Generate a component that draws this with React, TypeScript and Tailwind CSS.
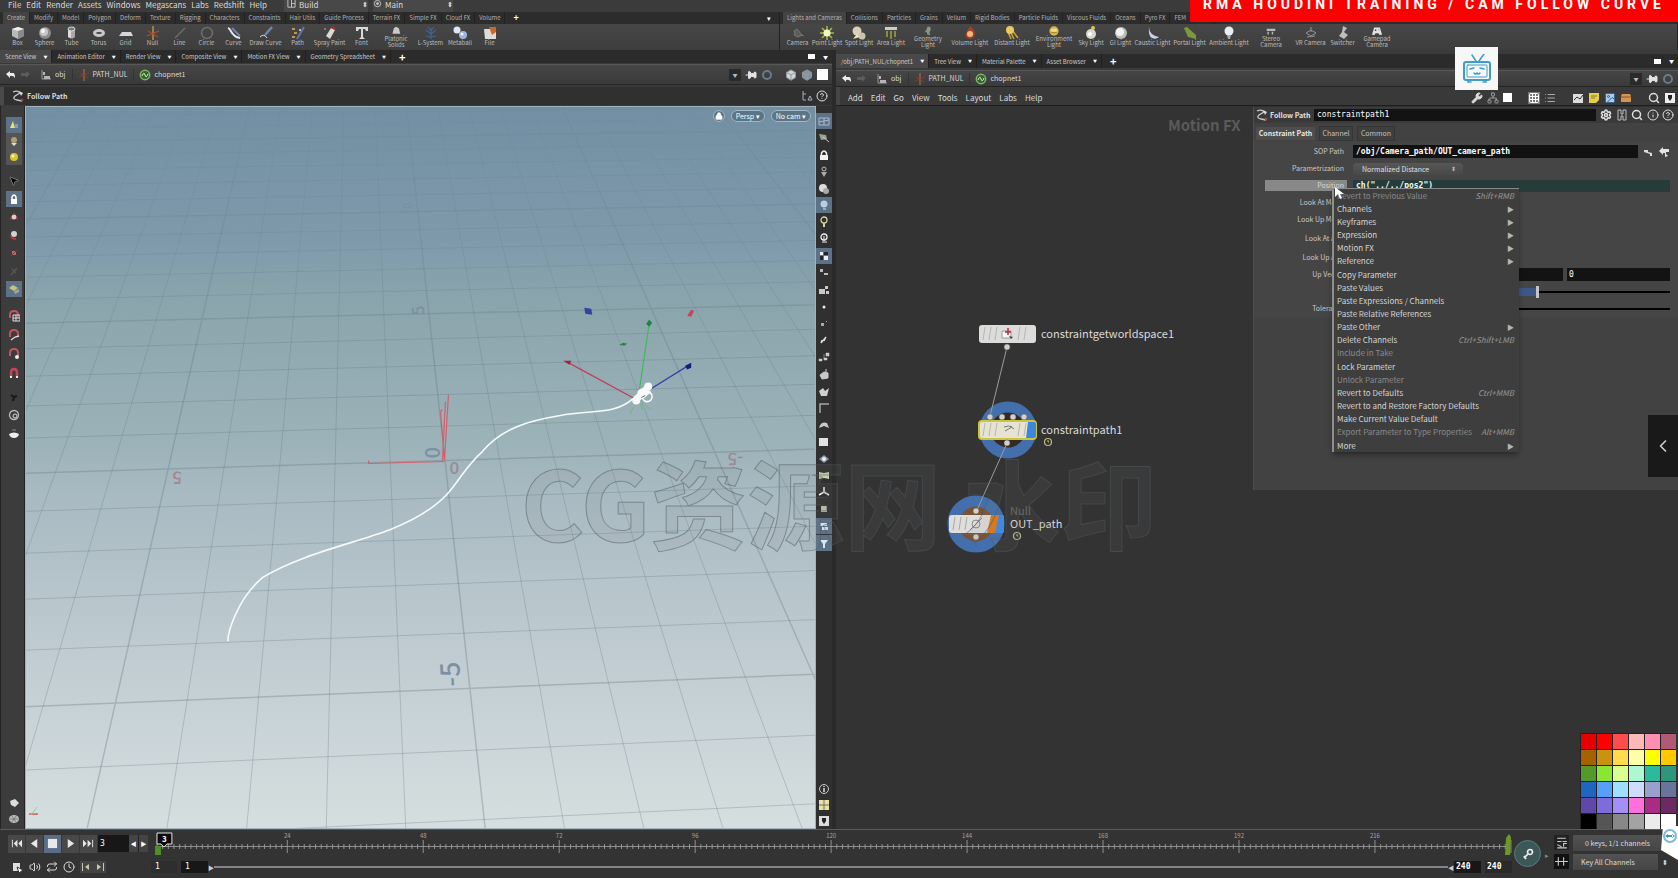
import React from 'react';
import { clsx } from 'clsx';
import {
  Box, ChevronLeft, CircleHelp, Grid3x3, Info, List, Lock, Magnet, MousePointer2,
  Pin, Search, Settings, Volume2, Wrench, Network, Image as ImageIcon, Repeat, Clock,
} from 'lucide-react';

type Tool = { name: string; icon: string; width: string };

const menus = ['File', 'Edit', 'Render', 'Assets', 'Windows', 'Megascans', 'Labs', 'Redshift', 'Help'];

const createTabs = ['Create', 'Modify', 'Model', 'Polygon', 'Deform', 'Texture', 'Rigging', 'Characters', 'Constraints', 'Hair Utils', 'Guide Process', 'Terrain FX', 'Simple FX', 'Cloud FX', 'Volume'];
const lightTabs = ['Lights and Cameras', 'Collisions', 'Particles', 'Grains', 'Vellum', 'Rigid Bodies', 'Particle Fluids', 'Viscous Fluids', 'Oceans', 'Pyro FX', 'FEM', 'Wires'];

const createTools: Tool[] = [
  { name: 'Box', icon: 'box', width: 'w-[27px]' },
  { name: 'Sphere', icon: 'sphere', width: 'w-[27px]' },
  { name: 'Tube', icon: 'tube', width: 'w-[27px]' },
  { name: 'Torus', icon: 'torus', width: 'w-[27px]' },
  { name: 'Grid', icon: 'grid', width: 'w-[27px]' },
  { name: 'Null', icon: 'null', width: 'w-[27px]' },
  { name: 'Line', icon: 'line', width: 'w-[27px]' },
  { name: 'Circle', icon: 'circle', width: 'w-[27px]' },
  { name: 'Curve', icon: 'curve', width: 'w-[27px]' },
  { name: 'Draw Curve', icon: 'draw', width: 'w-[37px]' },
  { name: 'Path', icon: 'path', width: 'w-[27px]' },
  { name: 'Spray Paint', icon: 'spray', width: 'w-[37px]' },
  { name: 'Font', icon: 'font', width: 'w-[27px]' },
  { name: 'Platonic Solids', icon: 'platonic', width: 'w-[42px]' },
  { name: 'L-System', icon: 'lsystem', width: 'w-[27px]' },
  { name: 'Metaball', icon: 'metaball', width: 'w-[32px]' },
  { name: 'File', icon: 'file', width: 'w-[27px]' },
];

const lightTools: Tool[] = [
  { name: 'Camera', icon: 'camera', width: 'w-[27px]' },
  { name: 'Point Light', icon: 'point', width: 'w-[32px]' },
  { name: 'Spot Light', icon: 'spot', width: 'w-[32px]' },
  { name: 'Area Light', icon: 'area', width: 'w-[32px]' },
  { name: 'Geometry Light', icon: 'geo', width: 'w-[42px]' },
  { name: 'Volume Light', icon: 'volume', width: 'w-[42px]' },
  { name: 'Distant Light', icon: 'distant', width: 'w-[42px]' },
  { name: 'Environment Light', icon: 'env', width: 'w-[42px]' },
  { name: 'Sky Light', icon: 'sky', width: 'w-[32px]' },
  { name: 'GI Light', icon: 'gi', width: 'w-[27px]' },
  { name: 'Caustic Light', icon: 'caustic', width: 'w-[37px]' },
  { name: 'Portal Light', icon: 'portal', width: 'w-[37px]' },
  { name: 'Ambient Light', icon: 'ambient', width: 'w-[42px]' },
  { name: 'Stereo Camera', icon: 'stereo', width: 'w-[42px]' },
  { name: 'VR Camera', icon: 'vr', width: 'w-[37px]' },
  { name: 'Switcher', icon: 'switcher', width: 'w-[27px]' },
  { name: 'Gamepad Camera', icon: 'gamepad', width: 'w-[42px]' },
];

const twoLine = ['platonic', 'geo', 'env', 'stereo', 'gamepad'];

function ToolIcon({ kind }: { kind: string }) {
  switch (kind) {
    case 'box':
      return <g><path d="M1 3 7 1l6 2v7l-6 3-6-3z" fill="#b9b9b9" /><path d="M1 3 7 1l6 2-6 2z" fill="#efefef" /><path d="M7 5l6-2v7l-6 3z" fill="#8a8a8a" /></g>;
    case 'sphere':
      return <g><circle cx="7" cy="7" r="6" fill="#8d8d8d" /><circle cx="6" cy="6" r="4" fill="#c9c9c9" /><circle cx="5" cy="5" r="2" fill="#f5f5f5" /></g>;
    case 'tube':
      return <g><path d="M3 3v8q4 3 7 0V3z" fill="#a8a8a8" /><path d="M3 3v8l3 1V4z" fill="#dcdcdc" /><ellipse cx="6.500" cy="3" rx="3.500" ry="2" fill="#777" stroke="#ddd" /></g>;
    case 'torus':
      return <ellipse cx="7" cy="7" rx="4.500" ry="2.500" fill="none" stroke="#c8c8c8" strokeWidth="3" />;
    case 'grid':
      return <path d="M3 6h9l2 4H0z" fill="#d6d6d6" />;
    case 'null':
      return <g fill="none" strokeWidth="1.300"><path d="M7 0v14" stroke="#c9a24a" /><path d="M1 10l12-5" stroke="#c2452f" /><path d="M2 5l10 6" stroke="#a05038" /></g>;
    case 'line':
      return <path d="M2 12 12 2" stroke="#6c6c6c" strokeWidth="1.500" />;
    case 'circle':
      return <circle cx="7" cy="7" r="5.500" fill="none" stroke="#6d6d6d" strokeWidth="1.500" />;
    case 'curve':
      return <g fill="none"><path d="M1 2c4 1 2 8 12 10" stroke="#dfe3f2" strokeWidth="2" /><path d="M5 2l8 8" stroke="#7681ae" strokeWidth="2" /></g>;
    case 'draw':
      return <g><path d="M13 1 6 9" stroke="#7383a8" strokeWidth="2.500" /><path d="M1 11q4-4 7 1" stroke="#ddd" fill="none" /></g>;
    case 'path':
      return <g><path d="M1 3h3M3 7h3M1 11h3" stroke="#b99c49" strokeWidth="2" /><path d="M13 1 6 13" stroke="#6475ad" strokeWidth="2" /><circle cx="9" cy="4" r="1" fill="#ddd" /></g>;
    case 'spray':
      return <g><path d="M3 10 8 2l4 2-5 9z" fill="#ddd6d6" /><path d="M8 2l2-2 3 2-1 2z" fill="#b32a2a" /><circle cx="2" cy="3" r="1" fill="#c77" /></g>;
    case 'font':
      return <path d="M1 1h12v4h-2l-1-2H8v8l2 2H4l2-2V3H4L3 5H1z" fill="#d9d9d9" />;
    case 'platonic':
      return <path d="M2 11 4 3l3-2 4 2 2 8z" fill="#c9c9c9" />;
    case 'lsystem':
      return <g stroke="#41658d" strokeWidth="1.200"><path d="M7 13V2M7 8 2 4M7 8l5-4M7 11l-5-1M7 11l5-1M7 5 4 1M7 5l3-4" /></g>;
    case 'metaball':
      return <g><circle cx="4" cy="4" r="3.500" fill="#dfe6f5" /><circle cx="10" cy="9" r="4" fill="#9fb4dd" /><circle cx="9" cy="8" r="1.500" fill="#f4f7ff" /></g>;
    case 'file':
      return <g><path d="M1 3h8l4 2v8H2z" fill="#dfdcd7" /><path d="M6 1h7v5l-4 3z" fill="#c8682d" /></g>;
    case 'camera':
      return <path d="M3 5l3-2 5 6-4 2-4-2 1-2zM10 9l3 1" fill="#5c5c5c" stroke="#8a8a8a" strokeWidth="0.700" />;
    case 'point':
      return <g><path d="M7 0v14M0 7h14M2 2l10 10M12 2 2 12" stroke="#a9ba3b" strokeWidth="1.500" /><circle cx="7" cy="7" r="3.500" fill="#f2f5c1" /></g>;
    case 'spot':
      return <g><circle cx="5" cy="5" r="4.500" fill="#d8d2b9" /><circle cx="10" cy="10" r="3.500" fill="#c9c4b2" /><path d="M1 13 5 8l3 3z" fill="#efe7ba" /></g>;
    case 'area':
      return <g><path d="M1 1h12v3H1z" fill="#cfd0bc" /><path d="M3 5v6M7 5v8M11 5v6" stroke="#9da646" strokeWidth="1.500" /></g>;
    case 'geo':
      return <path d="M6 1h4l1 4-2 4 1 4-4-1-1-4-3 1 3-4z" fill="#8d9482" />;
    case 'volume':
      return <g><path d="M7 0c5 4 6 7 4 11q-4 4-8 0C1 7 5 5 7 0z" fill="#a4402c" /><circle cx="7" cy="8" r="3" fill="#f3b878" /></g>;
    case 'distant':
      return <g><path d="M5 5l4 8M7 4l6 8M3 6l3 7" stroke="#c9a035" strokeWidth="1.600" /><circle cx="5" cy="4" r="4" fill="#e8ca5d" /></g>;
    case 'env':
      return <g><circle cx="7" cy="7" r="6.500" fill="#d9b746" /><path d="M2 7q5 3 10 0l-2-3H4z" fill="#f0dc92" /><path d="M3 9h8" stroke="#896e23" /></g>;
    case 'sky':
      return <g><circle cx="7" cy="8" r="5" fill="#d8d8d0" /><circle cx="9" cy="2" r="2" fill="#d7cc55" /><circle cx="6" cy="8" r="2" fill="#fff" /></g>;
    case 'gi':
      return <g><circle cx="7" cy="7" r="6" fill="#bcbcbc" /><circle cx="6" cy="6" r="4" fill="#f2f2f2" /></g>;
    case 'caustic':
      return <path d="M3 1q0 8 10 10-3 3-7 1T3 1z" fill="#cfd0e8" />;
    case 'portal':
      return <path d="M1 2l3-1 9 8v4l-8-2z" fill="#7c9a3d" />;
    case 'ambient':
      return <g><circle cx="7" cy="5" r="4.500" fill="#e9eef2" /><path d="M5 9h4l-1 4H6z" fill="#aab" /></g>;
    case 'stereo':
      return <path d="M1 4h12v3H1zM2 8h2v4H2zM8 8h2v4H8z" fill="#b8b8b8" />;
    case 'vr':
      return <path d="M2 7l5-3 5 3-5 3zM7 1v5M3 11l8-1" fill="none" stroke="#929292" />;
    case 'switcher':
      return <path d="M7 0l4 2-3 4 4 3-4 4-5-3 3-4z" fill="#bdbdbd" />;
    default:
      return <path d="M3 2h8l3 10-3 1-2-3H5l-2 3-3-1zM4 5v2h2V5zM9 5v1h1V5z" fillRule="evenodd" fill="#e2e2e2" />;
  }
}

function ShelfTabs({ tabs }: { tabs: string[] }) {
  return (
    <div className="flex h-3 items-stretch overflow-hidden bg-[#2c2c2c] pl-[3px] text-[6px] leading-[12px] text-[#b4b4b4]">
      {tabs.map((tab, i) => (
        <button key={tab} className={clsx('shrink-0 border-r border-[#222] px-1 whitespace-nowrap', i === 0 && 'bg-[#434343]')}>
          {tab}
        </button>
      ))}
      <button className="pl-2 text-[9px] font-bold text-white">+</button>
    </div>
  );
}

function Shelf({ tabs, tools, menu }: { tabs: string[]; tools: Tool[]; menu?: boolean }) {
  return (
    <section className="min-w-0 border-r border-[#222]">
      <div className="flex bg-[#2c2c2c]">
        <div className="min-w-0 flex-1"><ShelfTabs tabs={tabs} /></div>
        {menu && <button className="px-2 text-[7px] leading-[12px] text-white">▾</button>}
      </div>
      <div className="flex h-[26px] overflow-hidden bg-linear-to-b from-[#474747] to-[#3d3d3d] pl-1">
        {tools.map((tool) => {
          const wraps = twoLine.includes(tool.icon);
          return (
            <button key={tool.name} className={clsx('flex shrink-0 flex-col items-center pt-[2px]', tool.width, wraps ? 'px-1' : 'whitespace-nowrap')}>
              <svg viewBox="0 0 14 14" className={clsx('w-[14px] shrink-0', wraps ? 'h-[10px]' : 'h-[14px]')}>
                <ToolIcon kind={tool.icon} />
              </svg>
              <span className="text-[6px] leading-[6px] text-[#bdbdbd]">{tool.name}</span>
            </button>
          );
        })}
      </div>
    </section>
  );
}

function PaneTabs({ tabs, className }: { tabs: string[]; className: string }) {
  return (
    <div className={clsx('flex items-stretch bg-[#2b2b2b] text-[6px] text-[#cacaca]', className)}>
      {tabs.map((tab, i) => (
        <button key={tab} className={clsx('flex items-center gap-[7px] border-r border-[#202020] pr-1 pl-[5px] whitespace-nowrap', i === 0 && 'bg-[#484848]')}>
          {tab}
          <span className="text-[4px] text-white">▼</span>
        </button>
      ))}
      <button className="px-2 text-[11px] leading-[12px] font-bold text-white">+</button>
      <span className="ml-auto flex items-center gap-2 pr-1">
        <span className="h-[5px] w-[7px] bg-white" />
        <span className="text-[5px] text-white">▼</span>
      </span>
    </div>
  );
}

function NullIcon() {
  return (
    <svg viewBox="0 0 12 12" className="h-3 w-3">
      <path d="M6 0v12" stroke="#b4763c" />
      <path d="M1 8l10-4M2 4l8 5" stroke="#973c2c" strokeWidth="0.800" />
    </svg>
  );
}

function PathBar({ className, children }: { className: string; children: React.ReactNode }) {
  return (
    <nav className={clsx('flex items-center border-y border-t-[#585858] border-b-[#242424] bg-linear-to-b from-[#464646] to-[#3a3a3a] text-[7px] text-[#dcdcdc]', className)}>
      <button className="pl-1" aria-label="Back">
        <svg viewBox="0 0 12 12" className="h-3 w-3"><path d="M2 5l4-3v2h3q2 0 2 5-2-3-5-2v2z" fill="#eee" /></svg>
      </button>
      <button className="mr-2 pl-1" aria-label="Forward">
        <svg viewBox="0 0 12 12" className="h-3 w-3"><path d="M10 5 6 2v2H1v3h5v2z" fill="#5c5c5c" /></svg>
      </button>
      <button className="flex items-center gap-[3px] pr-[6px]">
        <svg viewBox="0 0 12 12" className="h-3 w-3"><path d="M2 1v9h9" stroke="#999" fill="none" /><path d="M3 3h2v3H3zM4 7h6v3H4z" fill="#b5b5b5" /></svg>
        obj
      </button>
      <button className="flex items-center gap-[3px] border-l border-[#333] pr-[6px] pl-[5px]">
        <NullIcon />
        PATH_NUL
      </button>
      <button className="flex items-center gap-[3px] border-l border-[#333] pl-[5px]">
        <svg viewBox="0 0 12 12" className="h-3 w-3"><circle cx="6" cy="6" r="4.700" fill="#39602f" stroke="#79b85e" strokeWidth="1.500" /><path d="M3 7q2-5 3-1t3-1" stroke="#d3f0c6" fill="none" /></svg>
        chopnet1
      </button>
      <div className="ml-auto flex items-center gap-1 pr-1">
        <button className="h-3 w-3 bg-[#2a2a2a] text-[5px] text-[#bbb]" aria-label="History">▼</button>
        {children}
      </div>
    </nav>
  );
}

function PinAndLink() {
  return (
    <>
      <Pin className="h-3 w-3 rotate-90 text-[#e2e2e2]" fill="currentColor" />
      <svg viewBox="0 0 12 12" className="h-3 w-3"><circle cx="6" cy="6" r="4" fill="none" stroke="#6e7a8b" strokeWidth="2" /></svg>
    </>
  );
}

function FollowIcon() {
  return (
    <svg viewBox="0 0 12 12" className="h-3 w-3 shrink-0">
      <path d="M1 2q5-2 7 1L3 6q-3 3 2 4l5 1" fill="none" stroke="#c9c9c9" strokeWidth="1.300" />
      <path d="M7 1l4 2-2 3z" fill="#ddd" /><circle cx="10" cy="10" r="1.300" fill="#b04a3e" />
    </svg>
  );
}

const quad = [[114.5, 703.8], [813, 675], [651, 308.8], [201.2, 319.4]];

// maps ground plane units to the viewport, the quad being the +-5 square
function project(u: number, v: number) {
  const [[x0, y0], [x1, y1], [x2, y2], [x3, y3]] = quad;
  const dx1 = x1 - x2, dx2 = x3 - x2, sx = x0 - x1 + x2 - x3;
  const dy1 = y1 - y2, dy2 = y3 - y2, sy = y0 - y1 + y2 - y3;
  const det = dx1 * dy2 - dx2 * dy1;
  const g = (sx * dy2 - dx2 * sy) / det;
  const h = (dx1 * sy - dy1 * sx) / det;
  const s = (u + 5) / 10;
  const t = (v + 5) / 10;
  const w = 1 + g * s + h * t;
  return [
    ((x1 - x0 + g * x1) * s + (x3 - x0 + h * x3) * t + x0) / w,
    ((y1 - y0 + g * y1) * s + (y3 - y0 + h * y3) * t + y0) / w,
  ];
}

function gridPath(from: number, to: number, heavy: boolean, segment: (n: number) => number[][]) {
  const parts: string[] = [];
  for (let n = from; n <= to; n++) {
    if ((n % 5 === 0) !== heavy) continue;
    const [a, b] = segment(n);
    parts.push(`M${a[0].toFixed(1)} ${a[1].toFixed(1)}L${b[0].toFixed(1)} ${b[1].toFixed(1)}`);
  }
  return parts.join('');
}

function Viewport() {
  const cols = (n: number) => [project(n, -10), project(n, 35)];
  const rows = (n: number) => [project(-25, n), project(25, n)];
  return (
    <div className="relative min-w-0 flex-1 overflow-hidden border border-[#9fb3bd] bg-linear-to-b from-[#738fa2] via-[#9db3b9] to-[#d5dede]">
      <svg viewBox="25 106 790 724" preserveAspectRatio="xMidYMid slice" className="absolute inset-0 h-full w-full">
        <defs>
          <linearGradient id="sky" x1="0" y1="0" x2="0" y2="1">
            <stop offset="0" stopColor="#728fa3" />
            <stop offset="0.190" stopColor="#7f9aab" />
            <stop offset="0.260" stopColor="#8aa4ac" />
            <stop offset="0.460" stopColor="#9bb2b8" />
            <stop offset="0.540" stopColor="#a9bac2" />
            <stop offset="0.750" stopColor="#bfcbd1" />
            <stop offset="1" stopColor="#d6dfdf" />
          </linearGradient>
          <linearGradient id="fade" gradientUnits="userSpaceOnUse" x1="0" y1="106" x2="0" y2="830">
            <stop offset="0" stopColor="#4f6a80" stopOpacity="0.060" />
            <stop offset="0.350" stopColor="#4f6a74" stopOpacity="0.260" />
            <stop offset="1" stopColor="#5c6a72" stopOpacity="0.320" />
          </linearGradient>
        </defs>
        <rect x="25" y="106" width="790" height="724" fill="url(#sky)" />
        <path d={gridPath(-25, 25, false, cols) + gridPath(-9, 22, false, rows)} stroke="url(#fade)" fill="none" strokeWidth="0.900" />
        <path d={gridPath(-25, 25, true, cols) + gridPath(-5, 30, true, rows)} stroke="url(#fade)" fill="none" strokeWidth="1.500" />

        <g className="font-['Noto_Sans_CJK_SC',sans-serif]" fill="#7b90a3" fontSize="17" fontWeight="500">
          <text transform="translate(424 315) rotate(-95)" fontSize="17">5</text>
          <text transform="translate(412 209) rotate(-95)" fontSize="12">0</text>
          <text transform="translate(405 136) rotate(-95)" fontSize="9">0</text>
          <text transform="translate(440 459) rotate(-90)" fontSize="20">0</text>
          <text transform="translate(460 687) rotate(-93)" fontSize="27">-5</text>
          <text x="449" y="475" fill="#978a94">0</text>
          <text transform="translate(181 472) rotate(178)" fill="#a3868e">5</text>
          <text transform="translate(743 453) rotate(178)" fill="#9c8991">-5</text>
        </g>

        <g fill="none" stroke="#d4606c" strokeWidth="1.200">
          <path d="M444 461 448 395M444 461 440 412 442 410M442 461 445 402M368 461v3l76-2" />
        </g>
        <path
          d="M227 642C227 634 236 600 262 578C300 555 350 545 390 530C420 518 438 505 449 492C462 476 468 464 482 452C502 428 530 421 560 416C590 410 615 416 634 398"
          fill="none" stroke="#f6fafa" strokeWidth="1.600"
        />

        <g strokeWidth="1.200" fill="none">
          <path d="M636 400 568 363" stroke="#c43c55" />
          <path d="M638 398 649 324" stroke="#40b95d" />
          <path d="M640 396 688 366" stroke="#3340a8" />
        </g>
        <path d="M563 361l8 0-2 4z" fill="#a81f38" />
        <path d="M646 324l3-4 3 3-3 4z" fill="#168a38" />
        <path d="M685 366l6-3 0 5-4 2z" fill="#141c7d" />
        <path d="M584 308l7 1 1 6-7-1z" fill="#3443a3" />
        <path d="M687 316l4-6 3 1-3 6z" fill="#c74458" />
        <path d="M619 345l4-2 4 1-3 2z" fill="#1f8b3c" />
        <path d="M645 405l6 6M640 404l2 6M633 408l-3 6" stroke="#63bb78" />
        <g fill="#f7faf9">
          <circle cx="636" cy="401" r="4" /><circle cx="642" cy="394" r="5" /><circle cx="648" cy="387" r="4" /><path d="M633 398l13-13 5 8-13 9z" />
        </g>
        <path d="M642 397a5 5 0 1 0 8-4" stroke="#fff" strokeWidth="1.500" fill="none" />
        <path d="M641 398l4-2" stroke="#667" />

        <path d="M28 815h9" stroke="#d55a5a" strokeWidth="1.500" /><path d="M30 816l6-8" stroke="#8fd09c" />
      </svg>
      <div className="relative flex justify-end gap-[6px] pt-[3px] pr-1 text-[7px] leading-[10px] text-white">
        <button className="rounded-full border border-[#a3b7c0] bg-[#5b7585] p-[1px]" aria-label="Lock view"><Lock className="h-2 w-2" fill="white" /></button>
        <button className="rounded-full border border-[#a3b7c0] bg-[#5b7585] px-1">Persp ▾</button>
        <button className="rounded-full border border-[#a3b7c0] bg-[#5b7585] px-1">No cam ▾</button>
      </div>
    </div>
  );
}

function SideIcon({ active, children }: { active?: boolean; children: React.ReactNode }) {
  return (
    <button className={clsx('flex h-4 w-4 shrink-0 items-center justify-center', active && 'bg-[#5d7187]')}>
      <svg viewBox="0 0 12 12" className="h-3 w-3" fill="none" stroke="none">{children}</svg>
    </button>
  );
}

const magnet = <path d="M2 8V5q0-4 4-4t4 4v3" stroke="#c05562" strokeWidth="2" />;

function LeftTools() {
  return (
    <aside className="flex w-[25px] flex-col items-center border-x border-l-[#242424] border-r-[#222] bg-[#3c3c3c] pt-[11px] pb-[2px] pl-[3px]">
      <div className="flex flex-col bg-[#555]">
        <SideIcon active><path d="M2 9 5 2l2 7z" fill="#e8e07a" /><path d="M7 5h3v4H7z" fill="#8a9bb0" /></SideIcon>
        <SideIcon><circle cx="6" cy="5" r="3" fill="#aaa36f" /><path d="M3 8l3 3 3-3z" fill="#ddd" /></SideIcon>
        <SideIcon><circle cx="6" cy="6" r="4" fill="#d9c32f" /><circle cx="5" cy="5" r="1.500" fill="#fff6a0" /></SideIcon>
      </div>
      <div className="mt-2 flex flex-col gap-[2px]">
        <button className="flex h-4 w-4 items-center justify-center"><MousePointer2 className="h-3 w-3 text-[#777]" fill="black" /></button>
        <SideIcon active><path d="M3 6h6v5H3z" fill="#fff" /><path d="M4 6V4q2-4 4 0v2" stroke="#fff" strokeWidth="1.500" /></SideIcon>
        <SideIcon><circle cx="6" cy="6" r="2.500" fill="#d9cfcf" /><path d="M2 8l2-1M10 8 8 7M6 2v2" stroke="#b23838" strokeWidth="1.500" /></SideIcon>
        <SideIcon><circle cx="6" cy="5" r="3" fill="#d8d0d0" /><path d="M3 6q0 4 5 4" stroke="#c44040" strokeWidth="1.500" /></SideIcon>
        <SideIcon><path d="M4 4h4v4H4z" fill="#9a7474" /><path d="M3 9l6-6" stroke="#9c3333" /></SideIcon>
        <SideIcon><path d="M3 10 9 3M4 4l4 4" stroke="#5b5454" strokeWidth="1.500" /></SideIcon>
        <SideIcon active><path d="M1 5l4-3 5 3-4 3z" fill="#c9c37a" /><path d="M6 8l5-2v3l-4 2z" fill="#a4a49a" /></SideIcon>
      </div>
      <div className="mt-[11px] flex flex-col gap-[3px]">
        <SideIcon>{magnet}<path d="M5 5h7v6H5zM8 5v6M5 8h7" stroke="#ddd" /></SideIcon>
        <SideIcon>{magnet}<path d="M3 11l4-3 4-1" stroke="#ddd" strokeWidth="1.300" /></SideIcon>
        <SideIcon>{magnet}<circle cx="9" cy="9" r="2" fill="#eee" /></SideIcon>
        <SideIcon><path d="M3 10V6q0-4 3-4t3 4v4" stroke="#c94458" strokeWidth="2.500" /><path d="M2 9h2v2H2zM8 9h2v2H8z" fill="#eee" /></SideIcon>
      </div>
      <div className="mt-2 flex flex-col gap-[2px]">
        <SideIcon><path d="M3 4l3 2 3-1M6 6l-1 4" stroke="#181818" strokeWidth="2" /></SideIcon>
        <SideIcon><circle cx="6" cy="6" r="4.500" stroke="#bbb" strokeWidth="1.300" /><circle cx="7" cy="7" r="2" stroke="#ddd" /></SideIcon>
        <SideIcon><path d="M1 7q5-3 10 0-1 4-5 4T1 7z" fill="#eee" /><path d="M4 3h4" stroke="#888" /></SideIcon>
      </div>
      <div className="mt-auto flex flex-col">
        <SideIcon><path d="M2 4l5-2 4 4-4 4-4-2z" fill="#ddd" /></SideIcon>
        <SideIcon><ellipse cx="6" cy="6" rx="5" ry="4" fill="#bdbdbd" /><path d="M2 6h8M4 3l4 6M8 3 4 9" stroke="#666" strokeWidth="0.700" /></SideIcon>
      </div>
    </aside>
  );
}

const displayIcons: { active?: boolean; art: React.ReactNode }[] = [
  { active: true, art: <path d="M1 3h10v7H1zM1 7l10-2M6 3v7" stroke="#a9bad0" /> },
  { art: <g><path d="M1 2l7 1 1 4-6 1z" fill="#9aa38c" /><path d="M5 5l6 5" stroke="#ccc" /></g> },
  { art: <g><path d="M2 6h8v5H2z" fill="#f2f2f2" /><path d="M3.500 6V4q2.500-4 5 0v2" stroke="#f2f2f2" strokeWidth="1.500" /></g> },
  { art: <g><circle cx="6" cy="3" r="2" stroke="#bbb" /><path d="M3 6h6L6 11z" fill="#aaa" /></g> },
  { art: <g><circle cx="5" cy="5" r="4" fill="#ddd" /><circle cx="8" cy="8" r="3" fill="#a9a9a9" /></g> },
  { active: true, art: <g><circle cx="6" cy="5" r="3.500" fill="#b9cde4" /><path d="M5 9h3v2H5z" fill="#8ba" /></g> },
  { art: <g><circle cx="6" cy="4" r="3" stroke="#cfd39a" strokeWidth="1.300" /><path d="M5 7h2v4H5z" fill="#cfd39a" /></g> },
  { art: <g><circle cx="6" cy="4" r="3" stroke="#eee" strokeWidth="1.300" /><path d="M4 9h5M6 3v5" stroke="#eee" /></g> },
  { active: true, art: <g><path d="M2 2h3v3H2zM6 6h4v4H6z" fill="#e8eef8" /><path d="M6 2h4v3H6zM2 6h3v4H2z" fill="#1d2633" /></g> },
  { art: <path d="M2 2h3v3H2zM6 6h4v2H6z" fill="#bcbcbc" /> },
  { art: <path d="M1 5h6v5H1zM7 2h3v3H7zM8 7h3v3H8z" fill="#c9c9c9" /> },
  { art: <circle cx="6" cy="6" r="1.500" fill="#eee" /> },
  { art: <path d="M3 5h3v3H3zM8 3h1v1H8z" fill="#a9a9a9" /> },
  { art: <path d="M3 9l5-6M3 9l1-3M8 3 6 7" stroke="#ddd" strokeWidth="1.300" /> },
  { art: <path d="M1 8h3v2H1zM6 7h3v2H6zM8 2h3v3H8zM6 3v5" fill="#ccc" stroke="#ccc" strokeWidth="0.500" /> },
  { art: <path d="M2 7l4-3 4 1v5L4 11zM8 1v3" fill="#c8c8c8" stroke="#ccc" /> },
  { art: <path d="M1 6l4-3 2 3 4-3-2 8H3z" fill="#cfcfcf" /> },
  { art: <path d="M2 11V2h9" stroke="#a5a5a5" strokeWidth="1.500" /> },
  { art: <path d="M1 9q2-7 8-5l2 5-5-2z" fill="#c9c9c9" /> },
  { art: <path d="M1 2h9v8H1z" fill="#e3e3e3" /> },
  { art: <g><path d="M1 6l5-4 5 4-5 4z" fill="#8c98ad" /><circle cx="6" cy="6" r="2" fill="#eee" /></g> },
  { art: <path d="M1 3l5 1 5-1v7l-5-1-5 1z" fill="#c5d1ad" /> },
  { art: <path d="M6 1v5L1 9M6 6l5 3" stroke="#eee" strokeWidth="1.500" /> },
  { art: <path d="M3 3h6v6H3z" fill="#bdb8a4" /> },
  { active: true, art: <path d="M2 3h7v3H2zM4 7h6v3H4z" fill="#d5e1ef" /> },
  { active: true, art: <path d="M2 3h8L7 7v4H5V7z" fill="#d5e6f5" /> },
];

function DisplayTools() {
  return (
    <aside className="flex w-4 flex-col items-center bg-[#303030] pt-[7px]">
      <div className="flex h-[438px] flex-col justify-between">
        {displayIcons.map((icon, i) => <SideIcon key={i} active={icon.active}>{icon.art}</SideIcon>)}
      </div>
      <div className="mt-auto flex flex-col">
        <SideIcon><circle cx="6" cy="6" r="4.500" stroke="#ccc" /><path d="M6 3v1M6 5v4" stroke="#ddd" strokeWidth="1.500" /></SideIcon>
        <SideIcon><path d="M1 1h10v10H1z" fill="#e6e2a8" /><path d="M6 1v10M1 6h10" stroke="#77754d" /></SideIcon>
        <SideIcon><path d="M1 1h10v10H1z" fill="#ddd" /><path d="M4 3h4v3L6 9 4 6z" fill="#222" /></SideIcon>
      </div>
    </aside>
  );
}

function ScenePane() {
  return (
    <section className="flex min-w-0 flex-col border-r-4 border-[#2a2a2a]">
      <PaneTabs className="h-[13px]" tabs={['Scene View', 'Animation Editor', 'Render View', 'Composite View', 'Motion FX View', 'Geometry Spreadsheet']} />
      <PathBar className="mt-px h-[21px]">
        <PinAndLink />
        <Box className="ml-2 h-3 w-3 text-[#8f9ba0]" fill="#d0d3d4" />
        <Box className="h-3 w-3 text-[#8f9ba0]" fill="#8494a8" />
        <span className="h-[11px] w-[11px] bg-white" />
      </PathBar>
      <header className="mt-[2px] flex h-[18px] items-center gap-[3px] border-l-4 border-[#4a4a4a] bg-[#303030] px-2 text-[7px] font-bold text-[#dadada]">
        <FollowIcon />
        Follow Path
        <svg viewBox="0 0 12 12" className="ml-auto h-3 w-3"><path d="M2 1v9h3M2 4h3M7 10h4L9 6z" stroke="#a3b0c4" fill="none" /></svg>
        <CircleHelp className="-mr-1 h-3 w-3 text-[#ddd]" />
      </header>
      <div className="mt-px flex min-h-0 flex-1">
        <LeftTools />
        <Viewport />
        <DisplayTools />
      </div>
    </section>
  );
}

function Dot({ x, y }: { x: number; y: number }) {
  return <circle cx={x} cy={y} r="3" fill="#d4cfc8" stroke="#555" strokeWidth="0.500" />;
}

function Badge({ x, y }: { x: number; y: number }) {
  return <g fill="none" stroke="#bcbb7a"><circle cx={x} cy={y} r="3.500" strokeWidth="1.200" /><path d={`M${x} ${y - 2}v2h1`} /></g>;
}

function Stripes({ x, y }: { x: number; y: number }) {
  return <path d={`M${x + 6} ${y + 2}l-2 13M${x + 12} ${y + 2}l-2 13M${x + 18} ${y + 2}l-2 13M${x + 41} ${y + 2}l-2 13M${x + 47} ${y + 2}l-2 13`} stroke="#aaa9a6" strokeWidth="0.800" fill="none" />;
}

function NodeGraph() {
  return (
    <svg viewBox="836 106 842 724" preserveAspectRatio="xMinYMin slice" className="absolute inset-0 h-full w-full font-['Noto_Sans_CJK_SC',sans-serif]">
      <text x="1168" y="131" fontSize="15" fontWeight="700" fill="#5a5a5a">Motion FX</text>

      <circle cx="1008" cy="430" r="23" fill="#302a28" stroke="#4370ad" strokeWidth="11" />
      <circle cx="976" cy="524" r="23" fill="#7b5334" stroke="#4370ad" strokeWidth="11" />
      <path d="M1007 347 990 416M1007 443 977 510" stroke="#9b9b9b" fill="none" />

      <rect x="979" y="325" width="57" height="18" rx="3" fill="#dcdcdb" />
      <Stripes x={979} y={325} />
      <path d="M1002 331h9v7h-9z" fill="#f6f6f6" stroke="#888" strokeWidth="0.800" /><path d="M1008 328v7M1005 332h6" stroke="#b92b3c" strokeWidth="1.500" />
      <path d="M1009 336l4 1-2 2z" fill="#444" />
      <Dot x={1007} y={347} />

      <rect x="979" y="421" width="57" height="18" rx="3" fill="#e6e3d2" stroke="#cfc53a" strokeWidth="2" />
      <path d="M1028 422h6q2 0 2 2v12q0 2-2 2h-8z" fill="#3e86dc" />
      <Stripes x={979} y={421} />
      <path d="M1004 427q5-2 8 0l-7 4M1010 426l4 3" stroke="#777" fill="none" />
      {[990, 1002, 1013, 1024].map((x) => <Dot key={x} x={x} y={417} />)}
      <Dot x={1007} y={443} />

      <rect x="949" y="515" width="55" height="18" rx="3" fill="#dfdedc" />
      <path d="M991 515h9l-4 18h-9z" fill="#d57b1d" />
      <path d="M999 515h3q2 0 2 2v14q0 2-2 2h-7z" fill="#4089e0" />
      <path d="M955 517l-2 13M961 517l-2 13M967 517l-2 13" stroke="#aaa9a6" />
      <circle cx="976" cy="524" r="4" stroke="#8a8a8a" fill="none" /><path d="M970 530l12-12" stroke="#8a8a8a" fill="none" />
      <Dot x={976} y={511} />
      <Dot x={976} y={537} />

      <Badge x={1048} y={442} />
      <Badge x={1017} y={536} />
      <g fill="#dadada" fontSize="11">
        <text x="1041" y="338">constraintgetworldspace1</text>
        <text x="1041" y="434">constraintpath1</text>
        <text x="1010" y="515" fill="#686868">Null</text>
        <text x="1010" y="528">OUT_path</text>
      </g>
    </svg>
  );
}

const contextItems: { label: string; keys?: string; sub?: boolean; off?: boolean }[] = [
  { label: 'Revert to Previous Value', keys: 'Shift+RMB', off: true },
  { label: 'Channels', sub: true },
  { label: 'Keyframes', sub: true },
  { label: 'Expression', sub: true },
  { label: 'Motion FX', sub: true },
  { label: 'Reference', sub: true },
  { label: 'Copy Parameter' },
  { label: 'Paste Values' },
  { label: 'Paste Expressions / Channels' },
  { label: 'Paste Relative References' },
  { label: 'Paste Other', sub: true },
  { label: 'Delete Channels', keys: 'Ctrl+Shift+LMB' },
  { label: 'Include in Take', off: true },
  { label: 'Lock Parameter' },
  { label: 'Unlock Parameter', off: true },
  { label: 'Revert to Defaults', keys: 'Ctrl+MMB' },
  { label: 'Revert to and Restore Factory Defaults' },
  { label: 'Make Current Value Default' },
  { label: 'Export Parameter to Type Properties', keys: 'Alt+MMB', off: true },
  { label: 'More', sub: true },
];

function ContextMenu() {
  return (
    <div role="menu" className="absolute top-[81px] left-[78px] z-10 flex h-[264px] w-[187px] flex-col border-t border-l-2 border-t-[#8a8a8a] border-l-[#8f8f8f] bg-[#3e3e3e] text-[8px] leading-[12px] shadow-md shadow-black/30">
      {contextItems.map((item) => (
        <button
          key={item.label}
          role="menuitem"
          className={clsx('flex w-full flex-1 items-center justify-between pr-[5px] pl-[3px] whitespace-nowrap', item.off ? 'text-[#8a8a8a]' : 'text-[#d4d4d4]')}
        >
          {item.label}
          {item.keys && <span className="text-[#9a9a9a] italic">{item.keys}</span>}
          {item.sub && <span className="text-[7px] text-[#b5b5b5]">▶</span>}
        </button>
      ))}
      <svg viewBox="0 0 10 12" className="absolute -top-[2px] left-[1px] h-3 w-[10px]">
        <path d="M0 0v10l3-3 2 5 2-1-2-4h4z" fill="#fff" />
      </svg>
    </div>
  );
}

function Row({ id, label, className, children }: { id: string; label: string; className?: string; children: React.ReactNode }) {
  return (
    <div className="flex h-[17px] items-center gap-[6px] pr-2">
      <label htmlFor={id} className={clsx('ml-[11px] w-[82px] pr-[3px] text-right text-[7px] leading-[11px]', className ?? 'text-[#c8c8c8]')}>{label}</label>
      <div className="flex min-w-0 flex-1 items-center gap-1">{children}</div>
    </div>
  );
}

function MenuField({ id, options }: { id: string; options: string[] }) {
  return (
    <select id={id} className="h-3 w-[110px] appearance-none rounded-sm bg-linear-to-b from-[#575757] to-[#484848] pl-[9px] text-[7px] leading-[12px] text-[#e0e0e0]">
      {options.map((o) => <option key={o}>{o}</option>)}
    </select>
  );
}

const mono = "font-['DejaVu_Sans_Mono',monospace]";

function Slider({ id, value }: { id: string; value: number }) {
  return (
    <>
      <input id={id} readOnly defaultValue={value ? '1' : '0'} className={clsx('h-3 w-[100px] bg-[#121212] pl-1 text-[8px] text-white', mono)} />
      <div className="relative flex h-3 flex-1 items-center">
        <span className="h-[2px] w-full bg-black" />
        {value > 0 && <span className="absolute left-0 h-2 bg-[#3f5688]" style={{ width: `${value}%` }} />}
        {value > 0 && <span className="absolute h-3 w-[3px] bg-[#c5c5c5]" style={{ left: `${value}%` }} />}
        <input type="range" aria-label={id} defaultValue={value} className="absolute inset-0 w-full opacity-0" />
      </div>
    </>
  );
}

function Parameters() {
  return (
    <section className="relative h-[383px] w-[425px] shrink-0 border-l border-[#4d4d4d] bg-[#424242]">
      <header className="flex h-4 items-center bg-[#3a3a3a] pl-[2px] text-[7px] font-bold text-[#e0e0e0]">
        <FollowIcon />
        <label htmlFor="node" className="ml-[2px] w-[44px] whitespace-nowrap">Follow Path</label>
        <input id="node" readOnly defaultValue="constraintpath1" className={clsx('h-3 min-w-0 flex-1 bg-[#131313] pl-[3px] text-[8px] font-normal text-white', mono)} />
        <div className="flex w-[82px] items-center justify-between px-1">
          <Settings className="h-3 w-3" strokeWidth={3} />
          <svg viewBox="0 0 12 12" className="h-3 w-3"><path d="M2 1h3v4h2V1h3v10H7V7H5v4H2z" fill="none" stroke="#bbb" /></svg>
          <Search className="h-3 w-3" strokeWidth={3} />
          <Info className="h-3 w-3" />
          <CircleHelp className="h-3 w-3" />
        </div>
      </header>
      <div role="tablist" className="flex h-[18px] items-center gap-1 pt-[2px] pl-[2px] text-[7px] leading-[13px] text-[#c4c4c4]">
        <button role="tab" className="w-[59px] bg-[#4d4d4d] font-bold whitespace-nowrap text-[#e4e4e4]">Constraint Path</button>
        <button role="tab" className="w-[34px] border border-[#353535] bg-[#3f3f3f]">Channel</button>
        <button role="tab" className="w-[38px] border border-[#353535] bg-[#3f3f3f]">Common</button>
      </div>
      <div className="h-[177px] bg-[#454545] pt-[2px]">
        <Row id="sop" label="SOP Path">
          <input id="sop" readOnly defaultValue="/obj/Camera_path/OUT_camera_path" className={clsx('h-[13px] min-w-0 flex-1 bg-[#111] pl-[3px] text-[8px] font-bold text-white', mono)} />
          <svg viewBox="0 0 12 12" className="h-3 w-3"><path d="M2 4h4v2l4 1v3H8V8L2 6z" fill="#ddd" /></svg>
          <svg viewBox="0 0 12 12" className="h-3 w-3"><path d="M1 5 5 1v2h6v3H8v2l2 2-3 1V7H5v2z" fill="#e4e4e4" /></svg>
        </Row>
        <Row id="param" label="Parametrization"><MenuField id="param" options={['Normalized Distance']} /><span className="-ml-4 text-[6px] text-[#bbb]">⬍</span></Row>
        <Row id="pos" label="Position" className="bg-[#888] text-[#d8d8d8]">
          <input id="pos" readOnly defaultValue={'ch("../../pos2")'} className={clsx('h-3 w-full bg-[#263c39] pl-[3px] text-[8px] font-bold text-[#e9fff8]', mono)} />
        </Row>
        <Row id="lookat" label="Look At Mode"><MenuField id="lookat" options={['Path']} /></Row>
        <Row id="lookup" label="Look Up Mode"><MenuField id="lookup" options={['Path']} /></Row>
        <div className="pt-[2px]">
          <Row id="ataxis" label="Look At Axis"><MenuField id="ataxis" options={['Z']} /></Row>
        </div>
        <div className="pt-[2px]">
          <Row id="upaxis" label="Look Up Axis"><MenuField id="upaxis" options={['Y']} /></Row>
        </div>
        <Row id="upvec" label="Up Vector">
          {[0, 1, 0].map((v, i) => (
            <input key={i} id={i ? undefined : 'upvec'} readOnly defaultValue={v} aria-label="Up Vector" className={clsx('h-[13px] w-full min-w-0 bg-[#131313] pl-[2px] text-[8px] text-white', mono)} />
          ))}
        </Row>
        <Row id="roll" label="Roll"><Slider id="roll" value={37} /></Row>
        <Row id="tol" label="Tolerance"><Slider id="tol" value={0} /></Row>
      </div>
      <ContextMenu />
    </section>
  );
}

const swatches = [
  '#e60000', '#ff0000', '#ff4d4d', '#ffb8b8', '#ff8fb0', '#b05a78',
  '#a66200', '#c99310', '#ffdb4d', '#ffffa8', '#ffff00', '#ffc800',
  '#55992b', '#8ae633', '#d8ff8f', '#adf7d2', '#2cba9c', '#2f967c',
  '#1f66c2', '#56a0f8', '#9fdfff', '#cddcff', '#99a0cc', '#6a7399',
  '#5f48a8', '#7e6cdc', '#a58ef5', '#ff70dc', '#a82c84', '#6b2b62',
  '#000000', '#555555', '#888888', '#a3a3a3', '#ebebeb', '#ffffff',
];

function NetworkPane() {
  return (
    <section className="flex min-w-0 flex-col">
      <PaneTabs className="mt-[4px] h-[14px]" tabs={['/obj/PATH_NUL/chopnet1', 'Tree View', 'Material Palette', 'Asset Browser']} />
      <PathBar className="mt-[2px] h-[17px]"><PinAndLink /></PathBar>
      <nav className="flex h-[18px] items-center gap-2 border-l-4 border-[#474747] bg-[#393939] pt-[3px] pr-[2px] pl-2 text-[8px] text-[#dcdcdc]">
        {['Add', 'Edit', 'Go', 'View', 'Tools', 'Layout', 'Labs', 'Help'].map((m) => <button key={m}>{m}</button>)}
        <div className="ml-auto flex items-center gap-1">
          <Wrench className="h-3 w-3" fill="currentColor" />
          <Network className="h-3 w-3 text-[#999]" />
          <span className="h-[9px] w-[9px] bg-white" />
          <span className="ml-3 bg-[#777]"><Grid3x3 className="h-3 w-3 text-white" /></span>
          <List className="h-3 w-3 text-[#aaa]" />
          <svg viewBox="0 0 12 12" className="ml-3 h-3 w-3"><path d="M1 2h10v9H1z" fill="#ddd" /><path d="M2 8l3-3 3 2 3-4" stroke="#333" fill="none" /></svg>
          <svg viewBox="0 0 12 12" className="h-3 w-3"><path d="M1 1h10v7l-3 3H1z" fill="#e5cf48" /><path d="M3 4h6M3 6h4" stroke="#8b7a1c" /></svg>
          <ImageIcon className="h-3 w-3 text-[#35648f]" fill="#a9cdec" />
          <svg viewBox="0 0 12 12" className="h-3 w-3"><path d="M1 4l1-2h8l1 2v6H1z" fill="#d5954b" /><path d="M1 5h10" stroke="#8a5723" /></svg>
          <Search className="ml-3 h-3 w-3" strokeWidth={3} />
          <svg viewBox="0 0 12 12" className="h-3 w-3"><path d="M1 1h10v10H1z" fill="#eee" /><path d="M4 3h4v3L6 9 4 6z" fill="#222" /></svg>
        </div>
      </nav>
      <div className="relative flex min-h-0 flex-1 justify-end border-t border-[#1c1c1c] bg-[#333] pt-px">
        <NodeGraph />
        <Parameters />
        <div className="absolute right-[2px] bottom-0 grid grid-cols-6 gap-px bg-[#222] pt-px pl-px">
          {swatches.map((c, i) => (
            <button key={i} aria-label={`Colour ${c}`} className="h-[15px] w-[15px]" style={{ backgroundColor: c }} />
          ))}
        </div>
        <button className="absolute top-[309px] right-0 flex h-[62px] w-[30px] items-center justify-center bg-[#191919] text-[#ccc]" aria-label="Open drawer">
          <ChevronLeft className="h-5 w-5" />
        </button>
      </div>
    </section>
  );
}

function Ruler() {
  const x = (frame: number) => 7 + (frame - 1) * 5.69;
  let ticks = '';
  for (let f = 1; f <= 240; f++) ticks += f % 24 === 0 ? `M${x(f)} 9v13` : `M${x(f)} 13v5`;
  return (
    <svg viewBox="0 0 1370 25" preserveAspectRatio="none" className="h-[25px] min-w-0 flex-1">
      <path d="M7 15.500H1366" stroke="#8f8f8f" />
      <path d={ticks} stroke="#9d9d9d" strokeWidth="0.900" />
      <g fill="#a5a5a5" fontSize="6" textAnchor="middle">
        {[24, 48, 72, 96, 120, 144, 168, 192, 216].map((f) => <text key={f} x={x(f)} y="7">{f}</text>)}
      </g>
      <path d="M5 15h6v9H5z" fill="#4f8f27" />
      <path d="M1361 24l1-17 3-4 2 3-1 18z" fill="#6b9a23" />
      <path d="M7 2h15v11h-5l-3 3-3-3H7z" fill="#0c0c0c" stroke="#e5e5e5" />
      <text x="12" y="11" fontSize="8" fontWeight="700" fill="#fff">3</text>
    </svg>
  );
}

const transport = [
  { name: 'First frame', art: 'M1 2h1v8H1zM7 2v8L3 6zM12 2v8L8 6z' },
  { name: 'Play backward', art: 'M9 1v10L2 6z' },
  { name: 'Stop', art: 'M1 1h10v10H1z' },
  { name: 'Play', art: 'M3 1v10l7-5z' },
  { name: 'Last frame', art: 'M0 2v8l4-4zM5 2v8l4-4zM10 2h1v8h-1z' },
];

function Timeline() {
  return (
    <footer className="flex h-[49px] shrink-0 border-t border-[#5a5a5a] bg-[#333] pl-2">
      <div className="flex min-w-0 flex-1 flex-col gap-px pt-px">
        <div className="flex h-[25px] items-center">
          <div className="flex bg-[#484848]">
            {transport.map((b) => (
              <button key={b.name} aria-label={b.name} className={clsx('flex h-[18px] w-[18px] items-center justify-center border-r border-[#383838]', b.name === 'Stop' && 'bg-[#5b6d86]')}>
                <svg viewBox="0 0 12 12" className="h-[11px] w-[11px]"><path d={b.art} fill="#e8e8e8" /></svg>
              </button>
            ))}
          </div>
          <input aria-label="Frame" readOnly defaultValue="3" className={clsx('h-[17px] w-[31px] bg-[#171717] pl-[2px] text-[8px] text-white', mono)} />
          <div className="mr-[2px] flex">
            <button className="h-[17px] w-[9px] bg-[#444] text-[6px] text-white" aria-label="Previous frame">◀</button>
            <button className="h-[17px] w-[10px] border-l border-[#222] bg-[#444] text-[6px] text-white" aria-label="Next frame">▶</button>
          </div>
          <Ruler />
        </div>
        <div className="flex h-5 items-center text-[8px] text-white">
          <div className="flex w-[143px] items-center gap-[5px] pl-1 text-[#ddd]">
            <svg viewBox="0 0 12 12" className="h-3 w-3"><path d="M1 2h7v8H1z" fill="#ddd" /><path d="M5 6l6 3-4 3z" fill="#fff" stroke="#333" /></svg>
            <Volume2 className="h-3 w-3" />
            <Repeat className="h-3 w-3" />
            <Clock className="h-3 w-3" />
            <span className="flex gap-[2px] bg-[#444]">
              <svg viewBox="0 0 12 12" className="h-3 w-3"><path d="M2 2h1v8H2zM9 3v6L5 6z" fill="#c9c7a8" /></svg>
              <svg viewBox="0 0 12 12" className="h-3 w-3"><path d="M3 3v6l4-3zM9 2h1v8H9z" fill="#c9c7a8" /></svg>
            </span>
          </div>
          <input aria-label="Global start" readOnly defaultValue="1" className={clsx('h-3 w-[26px] bg-[#2e2e2e] pl-1 text-[8px]', mono)} />
          <input aria-label="Range start" readOnly defaultValue="1" className={clsx('ml-1 h-3 w-[27px] bg-[#171717] pl-1 text-[8px]', mono)} />
          <div className="flex min-w-0 flex-1 items-center">
            <span className="text-[6px] text-[#ccc]">▶</span>
            <span className="h-[2px] flex-1 bg-[#858585]" />
            <span className="text-[6px] text-[#ccc]">◀</span>
          </div>
          <input aria-label="Range end" readOnly defaultValue="240" className={clsx('h-3 w-[27px] bg-[#171717] pl-[2px] text-[8px] font-bold', mono)} />
          <input aria-label="Global end" readOnly defaultValue="240" className={clsx('mr-[2px] ml-1 h-3 w-[27px] bg-[#2a2a2a] pl-[2px] text-[8px] font-bold', mono)} />
        </div>
      </div>
      <button className="mt-[10px] flex h-[27px] w-[27px] items-center justify-center rounded-full border border-[#56807e] bg-[#3d5656]" aria-label="Set key">
        <svg viewBox="0 0 12 12" className="h-3 w-3"><circle cx="8" cy="4" r="2.500" fill="none" stroke="#eee" strokeWidth="1.700" /><path d="M6 6l-4 4M2 8l2 3" stroke="#eee" strokeWidth="1.700" /></svg>
      </button>
      <span className="w-3 pt-5 text-center text-[7px] text-[#888]">▸</span>
      <div className="ml-px flex w-[124px] flex-col gap-[3px] pt-[5px] text-[7px] text-[#dcdcdc]">
        <div className="flex gap-1">
          <svg viewBox="0 0 14 14" className="h-[15px] w-[15px] bg-[#222]"><path d="M3 3h8M3 6h4M8 6h4M3 9l4 2M9 11V8h3M3 12h9" stroke="#ccc" fill="none" /></svg>
          <button className="h-4 flex-1 bg-linear-to-b from-[#525252] to-[#454545] pr-4">0 keys, 1/1 channels</button>
        </div>
        <div className="flex gap-1">
          <svg viewBox="0 0 14 14" className="h-[15px] w-[15px] bg-[#111]"><path d="M1 7h12M4 3v8M9 3v8" stroke="#ccc" fill="none" /></svg>
          <select aria-label="Key scope" className="h-4 flex-1 appearance-none bg-linear-to-b from-[#525252] to-[#454545] pl-2">
            <option>Key All Channels</option>
          </select>
          <span className="w-4 text-[7px] leading-4">⬍</span>
        </div>
      </div>
    </footer>
  );
}

export default function App() {
  return (
    <div className="relative flex h-screen min-h-[600px] flex-col overflow-hidden bg-[#3a3a3a] font-['Noto_Sans_CJK_SC',sans-serif]">
      <nav className="flex h-3 shrink-0 items-start gap-[5px] bg-[#3b3b3b] pl-2 text-[8px] leading-[9px] text-[#dadada]">
        {menus.map((m) => <button key={m}>{m}</button>)}
        <label className="ml-3 flex h-3 w-[84px] items-start gap-[3px] bg-[#484848] pl-[3px]">
          <svg viewBox="0 0 10 10" className="h-[9px] w-[9px]"><path d="M1 0v8h8V0M5 0v8M5 4h4" stroke="#ccc" fill="none" /></svg>
          <select className="w-12 appearance-none leading-[9px]"><option>Build</option></select>
          <span className="ml-auto text-[7px]">⬍</span>
        </label>
        <label className="flex h-3 w-[80px] items-start gap-[3px] bg-[#484848]">
          <svg viewBox="0 0 10 10" className="h-[9px] w-[9px]"><circle cx="5" cy="4" r="3.500" stroke="#ccc" fill="none" /><circle cx="5" cy="4" r="1.500" fill="#ccc" /></svg>
          <select className="w-12 appearance-none leading-[9px]"><option>Main</option></select>
          <span className="ml-auto text-[7px]">⬍</span>
        </label>
      </nav>
      <div className="grid shrink-0 grid-cols-[780fr_898fr]">
        <Shelf tabs={createTabs} tools={createTools} menu />
        <Shelf tabs={lightTabs} tools={lightTools} />
      </div>
      <main className="grid min-h-0 flex-1 grid-cols-[836fr_842fr]">
        <ScenePane />
        <NetworkPane />
      </main>
      <Timeline />

      <div className="absolute top-0 right-0 flex h-[22px] w-[488px] items-start justify-center overflow-hidden bg-[#fb0000] font-['Roboto',sans-serif] text-[14px] leading-[8px] font-bold tracking-[4px] whitespace-nowrap text-white">
        RMA HOUDINI TRAINING / CAM FOLLOW CURVE
      </div>
      <div className="absolute top-[47px] right-[180px] flex h-[43px] w-[43px] items-center justify-center bg-[#f7f7f7]">
        <svg viewBox="0 0 30 30" className="h-[30px] w-[30px]" fill="none" stroke="#3d9ccb" strokeLinecap="round">
          <path d="M10 1l4 6M22 0l-5 7" strokeWidth="1.500" />
          <rect x="2" y="8" width="26" height="18" rx="2" strokeWidth="2" />
          <rect x="5" y="11" width="20" height="12" rx="1" />
          <path d="M8 15l4-1M22 15l-4-1M12 19q1.500 2 3 0 1.500 2 3 0" strokeWidth="1.500" />
          <path d="M6 27v1h3M24 27v1h-3" strokeWidth="1.500" />
        </svg>
      </div>
      <div className="pointer-events-none absolute inset-x-0 top-[438px] text-center text-[97px] leading-[124px] font-bold text-[#808080]/10 [-webkit-text-stroke:1px_rgba(80,90,95,0.5)]">
        CG资源网 水印
      </div>
      <svg viewBox="0 0 17 34" className="absolute right-0 bottom-[18px] h-[34px] w-[17px]">
        <path d="M2 0h15v34L0 24z" fill="#fff" />
        <circle cx="9" cy="10" r="6" fill="none" stroke="#7fb9d8" strokeWidth="2" />
        <path d="M4 10l3-2v4zM14 10l-3-2v4zM6 9h6v2H6z" fill="#4396c5" />
      </svg>
    </div>
  );
}
